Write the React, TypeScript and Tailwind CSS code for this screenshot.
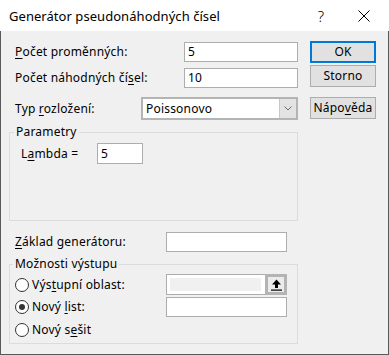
import React from "react";

function U({ children }: { children: React.ReactNode }) {
  return <span className="underline decoration-1 underline-offset-[2px]">{children}</span>;
}

function Radio({ checked }: { checked?: boolean }) {
  return (
    <span className="w-[14px] h-[14px] shrink-0 rounded-full border border-[#333333] bg-white flex items-center justify-center">
      {checked ? <span className="w-[6px] h-[6px] rounded-full bg-[#333333]" /> : null}
    </span>
  );
}

export default function App() {
  return (
    <div className="w-[389px] h-[355px] flex flex-col bg-[#f0f0f0] text-black text-[12px] leading-[16px] font-['Noto_Sans',sans-serif]">
      <div className="h-[31px] bg-white flex items-center shrink-0">
        <span className="pl-[9px] text-[13px] tracking-[0.05px]">Generátor pseudonáhodných čísel</span>
        <span className="ml-auto text-[15px] leading-[16px] font-light">?</span>
        <svg className="ml-[34px] mr-[19px]" width="12" height="12" viewBox="0 0 12 12">
          <path d="M0.5 0.5 L11.5 11.5 M11.5 0.5 L0.5 11.5" stroke="#000" strokeWidth="1" fill="none" />
        </svg>
      </div>
      <div className="flex-1 flex border-x border-b border-[#595959] pl-[8px] tracking-[0.2px]">
        <div className="w-[289px] flex flex-col">
          <div className="mt-[11px] h-[20px] flex items-center">
            <span className="pl-[6px]"><U>P</U>očet proměnných:</span>
            <div className="ml-auto w-[114px] h-[20px] border border-[#adadad] bg-white pl-[3px] flex items-center">5</div>
          </div>
          <div className="mt-[6px] h-[20px] flex items-center">
            <span className="pl-[6px]">Počet náhodných čí<U>s</U>el:</span>
            <div className="ml-auto w-[114px] h-[20px] border border-[#adadad] bg-white pl-[3px] flex items-center">10</div>
          </div>
          <div className="mt-[9px] h-[23px] flex items-center">
            <span className="pl-[6px]">Typ <U>r</U>ozložení:</span>
            <div className="ml-auto w-[157px] h-[23px] border-2 border-[#b4b4b4] bg-white flex items-center">
              <span className="pl-[3px]">Poissonovo</span>
              <div className="ml-auto w-[17px] h-full bg-[#e3e3e3] border-l border-[#c8c8c8] flex items-center justify-center">
                <svg width="8" height="5" viewBox="0 0 8 5">
                  <path d="M0.5 0.5 L4 4 L7.5 0.5" stroke="#6d6d6d" strokeWidth="1" fill="none" />
                </svg>
              </div>
            </div>
          </div>
          <fieldset className="mt-[4px] h-[97px] border border-[#dcdcdc] flex flex-col">
            <legend className="ml-[4px] px-[2px] leading-[16px]">Parametry</legend>
            <div className="mt-[3px] h-[21px] flex items-center">
              <span className="w-[87px] pl-[11px]">L<U>a</U>mbda =</span>
              <div className="w-[46px] h-[21px] border border-[#adadad] bg-white pl-[3px] flex items-center">5</div>
            </div>
          </fieldset>
          <div className="mt-[11px] h-[20px] flex items-center">
            <span className="w-[157px] pl-[6px]"><U>Z</U>áklad generátoru:</span>
            <div className="w-[121px] h-[20px] border border-[#adadad] bg-white" />
          </div>
          <fieldset className="mt-[4px] h-[88px] border border-[#dcdcdc] flex flex-col">
            <legend className="ml-[3px] px-[2px] leading-[16px]">Možnosti výstupu</legend>
            <div className="mt-[2px] h-[21px] flex items-center">
              <div className="w-[156px] flex items-center pl-[5px]">
                <Radio />
                <span className="ml-[3px]">Výs<U>t</U>upní oblast:</span>
              </div>
              <div className="w-[121px] h-[21px] flex">
                <div className="flex-1 border-y border-l border-[#adadad] bg-white p-[3px] pr-[4px]">
                  <div className="w-full h-full bg-[#f0f0f0]" />
                </div>
                <div className="w-[22px] h-full border-[3px] border-[#b4b4b4] bg-[#ececec] flex items-center justify-center">
                  <svg width="11" height="12" viewBox="0 0 11 12">
                    <path d="M5.5 0.5 L1 5.5 H4 V9 H7 V5.5 H10 Z" fill="#000" />
                    <rect x="0" y="10.5" width="11" height="1.2" fill="#000" />
                  </svg>
                </div>
              </div>
            </div>
            <div className="mt-[2px] h-[20px] flex items-center">
              <div className="w-[156px] flex items-center pl-[5px]">
                <Radio checked />
                <span className="ml-[3px]">Nový <U>l</U>ist:</span>
              </div>
              <div className="w-[121px] h-[20px] border border-[#adadad] bg-white" />
            </div>
            <div className="mt-[3px] h-[20px] flex items-center">
              <div className="w-[156px] flex items-center pl-[5px]">
                <Radio />
                <span className="ml-[3px]">Nový s<U>e</U>šit</span>
              </div>
            </div>
          </fieldset>
        </div>
        <div className="ml-[12px] w-[66px] flex flex-col">
          <div className="mt-[10px] h-[22px] border-2 border-[#0078d7] bg-[#e1e1e1] flex items-center justify-center">OK</div>
          <div className="mt-[2px] h-[22px] border border-[#adadad] bg-[#e1e1e1] flex items-center justify-center">Storno</div>
          <div className="mt-[10px] h-[22px] border border-[#adadad] bg-[#e1e1e1] flex items-center justify-center">Nápo<U>v</U>ěda</div>
        </div>
      </div>
    </div>
  );
}
